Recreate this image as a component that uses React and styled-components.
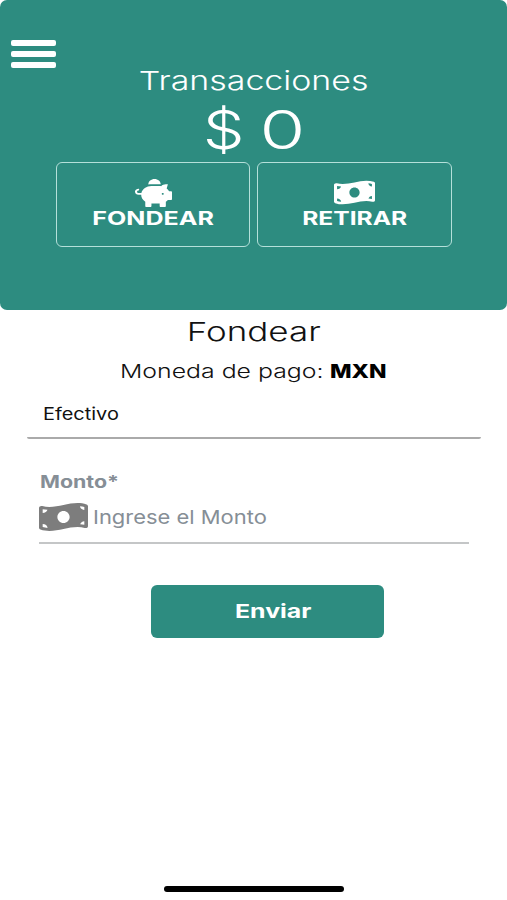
import React from 'react';
import styled, { createGlobalStyle } from 'styled-components';
import { FaPiggyBank, FaMoneyBillWave } from 'react-icons/fa';

const GlobalStyle = createGlobalStyle`
  *, *::before, *::after { box-sizing: border-box; }
  body { margin: 0; background: #fff; }
`;

const teal = '#2d8c80';

const Screen = styled.div`
  display: flex;
  flex-direction: column;
  height: 900px;
  overflow: hidden;
  background: #fff;
  color: #111;
  font-family: Inter, "Open Sans", sans-serif;
`;

/* Wide lettering: the font is widened horizontally around its anchor. */
const Wide = styled.span`
  display: inline-block;
  white-space: nowrap;
  font-size: ${(p) => p.$size}px;
  font-weight: ${(p) => p.$weight || 400};
  line-height: 1;
  transform: scaleX(${(p) => p.$k});
  transform-origin: ${(p) => p.$anchor || 'center'};
`;

const Header = styled.header`
  flex: none;
  display: flex;
  flex-direction: column;
  height: 309.5px;
  background: ${teal};
  border-radius: 7px;
  color: #fff;
`;

const MenuButton = styled.button`
  display: flex;
  flex-direction: column;
  gap: 5px;
  width: 45.5px;
  margin: 40.4px 0 0 10.5px;
  padding: 0;
  border: 0;
  background: none;
`;

const MenuBar = styled.span`
  height: 6px;
  border-radius: 2px;
  background: #fff;
`;

const HeaderTitle = styled.h1`
  display: flex;
  justify-content: center;
  height: 27px;
  margin: -0.4px 0 0;
`;

const Amount = styled.div`
  display: flex;
  justify-content: center;
  gap: 26px;
  height: 53px;
  margin: 8.5px 1px 0 0;
`;

const Actions = styled.div`
  display: flex;
  justify-content: center;
  gap: 7px;
  margin-top: 5px;
`;

const ActionButton = styled.button`
  display: flex;
  flex-direction: column;
  align-items: center;
  width: 194.5px;
  height: 85.5px;
  padding: 16px 0 0;
  border: 1.5px solid #b5e0da;
  border-radius: 6px;
  background: none;
  color: #fff;
  font-family: inherit;
`;

const ActionIcon = styled.span`
  display: flex;
  align-items: center;
  height: 27px;
  margin-bottom: 3px;
`;

const Form = styled.main`
  display: flex;
  flex-direction: column;
`;

const FormTitle = styled.h2`
  display: flex;
  justify-content: center;
  height: 26px;
  margin: 9px 0 0;
`;

const Currency = styled.p`
  display: flex;
  height: 19px;
  margin: 17px 0 0 120px;
`;

const CurrencyLabel = styled.span`
  width: 209.5px;
`;

const CurrencyCode = styled.strong`
  color: #000;
`;

const Select = styled.div`
  height: 35px;
  margin: 23.5px 26px 0 27px;
  padding-left: 15.5px;
  border-bottom: 2px solid #aaa;
  border-radius: 2px;
`;

const Field = styled.label`
  display: flex;
  flex-direction: column;
  margin: 32.5px 38px 0 39px;
  border-bottom: 2px solid #c4c6c7;
  color: #868e96;
`;

const FieldName = styled.span`
  height: 20px;
  padding-left: 1px;
`;

const InputRow = styled.span`
  display: flex;
  align-items: center;
  gap: 5px;
  height: 30px;
  margin: 10px 0 10px;
`;

const BillSlot = styled.span`
  display: flex;
  width: 49px;
  color: #7d7d7d;
`;

const Placeholder = styled.span`
  display: flex;
  padding-top: 3.5px;
`;

const Submit = styled.button`
  align-self: center;
  display: flex;
  align-items: center;
  justify-content: center;
  width: 233.5px;
  height: 53px;
  margin: 41.6px 0 0 28px;
  padding: 0 0 0 12px;
  border: 0;
  border-radius: 6px;
  background: ${teal};
  color: #fff;
  font-family: inherit;
`;

const HomeIndicator = styled.div`
  align-self: center;
  width: 180px;
  height: 5.5px;
  margin: auto 0 8.5px;
  border-radius: 3px;
  background: #000;
`;

const PiggyBank = styled(FaPiggyBank)`
  width: 37px;
  height: 28px;
  margin: 1px 0 0 1px;
`;

const Bill = styled(FaMoneyBillWave)`
  width: ${(p) => p.width};
  height: ${(p) => p.height};
`;

export default function App() {
  return (
    <Screen>
      <GlobalStyle />
      <Header>
        <MenuButton aria-label="Menú">
          <MenuBar />
          <MenuBar />
          <MenuBar />
        </MenuButton>
        <HeaderTitle>
          <Wide $size={26.2} $k={1.295} $weight={300}>Transacciones</Wide>
        </HeaderTitle>
        <Amount>
          <Wide $size={53} $k={1.25} $weight={300}>$</Wide>
          <Wide $size={53} $k={1.4} $weight={300}>0</Wide>
        </Amount>
        <Actions>
          <ActionButton>
            <ActionIcon>
              <PiggyBank preserveAspectRatio="none" />
            </ActionIcon>
            <Wide $size={18.6} $k={1.347} $weight={700}>FONDEAR</Wide>
          </ActionButton>
          <ActionButton>
            <ActionIcon>
              <Bill preserveAspectRatio="none" width="41px" height="27px" />
            </ActionIcon>
            <Wide $size={18.6} $k={1.323} $weight={700}>RETIRAR</Wide>
          </ActionButton>
        </Actions>
      </Header>
      <Form>
        <FormTitle>
          <Wide $size={26} $k={1.345} $weight={300}>Fondear</Wide>
        </FormTitle>
        <Currency>
          <CurrencyLabel>
            <Wide $size={19} $k={1.307} $weight={350} $anchor="left">Moneda de pago:</Wide>
          </CurrencyLabel>
          <CurrencyCode>
            <Wide $size={19} $k={1.205} $weight={800} $anchor="left">MXN</Wide>
          </CurrencyCode>
        </Currency>
        <Select>
          <Wide $size={16.8} $k={1.187} $anchor="left">Efectivo</Wide>
        </Select>
        <Field>
          <FieldName>
            <Wide $size={17} $k={1.258} $weight={700} $anchor="left">Monto*</Wide>
          </FieldName>
          <InputRow>
            <BillSlot>
              <Bill preserveAspectRatio="none" width="49px" height="32px" />
            </BillSlot>
            <Placeholder>
              <Wide $size={18.8} $k={1.168} $anchor="left">Ingrese el Monto</Wide>
            </Placeholder>
          </InputRow>
        </Field>
        <Submit>
          <Wide $size={19} $k={1.31} $weight={700}>Enviar</Wide>
        </Submit>
      </Form>
      <HomeIndicator />
    </Screen>
  );
}
